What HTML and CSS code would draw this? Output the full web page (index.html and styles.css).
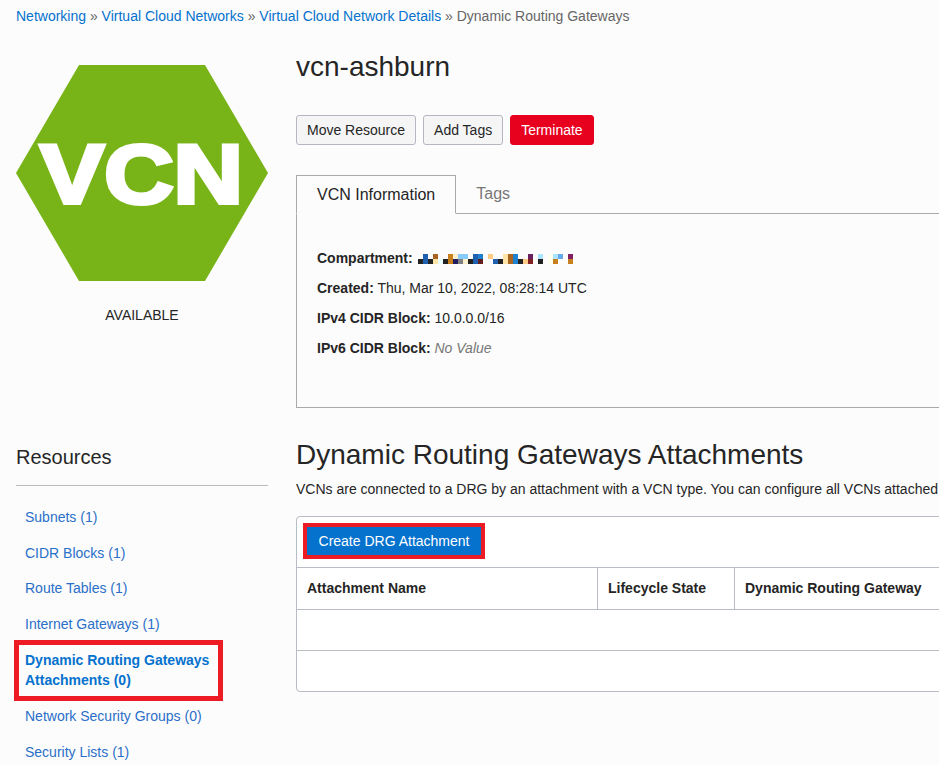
FILE: index.html
```html
<!DOCTYPE html>
<html lang="en">
<head>
    <meta charset="UTF-8">
    <title>Dynamic Routing Gateways</title>
    <link rel="stylesheet" href="styles.css">
</head>
<body>
    <nav class="breadcrumb">
        <a href="#">Networking</a> » <a href="#">Virtual Cloud Networks</a> » <a href="#">Virtual Cloud Network Details</a> » Dynamic Routing Gateways
    </nav>
    <div class="layout">
        <div class="status">
            <svg class="hexagon" width="252" height="216" viewBox="0 0 252 216">
                <polygon points="63,0 189,0 252,108 189,216 63,216 0,108" fill="#78b418"/>
                <text x="24" y="138" textLength="203" lengthAdjust="spacingAndGlyphs" class="hexagon-text">VCN</text>
            </svg>
            <div class="status-label">AVAILABLE</div>
        </div>
        <div class="details">
            <h1 class="title">vcn-ashburn</h1>
            <div class="actions">
                <button class="btn">Move Resource</button>
                <button class="btn">Add Tags</button>
                <button class="btn btn-danger">Terminate</button>
            </div>
            <div class="tabs">
                <div class="tab active">VCN Information</div>
                <div class="tab">Tags</div>
            </div>
            <div class="tab-panel">
                <div class="info-row">
                    <b>Compartment:</b>
                    <svg class="redacted" width="155" height="10" viewBox="0 0 31 2" shape-rendering="crispEdges">
                        <rect x="1" y="0" width="1" height="2" fill="#2060b0"/>
                        <rect x="3" y="0" width="1" height="1" fill="#a86420"/>
                        <rect x="6" y="0" width="1" height="2" fill="#c8801f"/>
                        <rect x="7" y="0" width="1" height="1" fill="#fff0d0"/>
                        <rect x="8" y="0" width="2" height="1" fill="#88ccff"/>
                        <rect x="11" y="0" width="1" height="2" fill="#2060b0"/>
                        <rect x="12" y="0" width="1" height="1" fill="#2080d0"/>
                        <rect x="14" y="0" width="1" height="1" fill="#ffcc88"/>
                        <rect x="17" y="0" width="1" height="2" fill="#ffe4a8"/>
                        <rect x="18" y="0" width="1" height="2" fill="#a86420"/>
                        <rect x="19" y="0" width="1" height="2" fill="#2080d0"/>
                        <rect x="22" y="0" width="1" height="1" fill="#6b2060"/>
                        <rect x="24" y="0" width="1" height="1" fill="#aae4ff"/>
                        <rect x="26" y="0" width="1" height="2" fill="#fffff0"/>
                        <rect x="27" y="0" width="1" height="1" fill="#aae4ff"/>
                        <rect x="28" y="0" width="1" height="1" fill="#66aaee"/>
                        <rect x="30" y="0" width="1" height="1" fill="#802060"/>
                        <rect x="0" y="1" width="1" height="1" fill="#222"/>
                        <rect x="2" y="1" width="1" height="1" fill="#222"/>
                        <rect x="3" y="1" width="1" height="1" fill="#ffe4a8"/>
                        <rect x="4" y="1" width="1" height="1" fill="#e8ffff"/>
                        <rect x="5" y="1" width="1" height="1" fill="#222"/>
                        <rect x="7" y="1" width="1" height="1" fill="#202060"/>
                        <rect x="8" y="1" width="1" height="1" fill="#808080"/>
                        <rect x="9" y="1" width="1" height="1" fill="#fff0d0"/>
                        <rect x="10" y="1" width="1" height="1" fill="#222"/>
                        <rect x="12" y="1" width="1" height="1" fill="#602020"/>
                        <rect x="15" y="1" width="1" height="1" fill="#2060b0"/>
                        <rect x="16" y="1" width="1" height="1" fill="#222"/>
                        <rect x="20" y="1" width="1" height="1" fill="#222"/>
                        <rect x="21" y="1" width="1" height="1" fill="#ffcc88"/>
                        <rect x="22" y="1" width="1" height="1" fill="#802020"/>
                        <rect x="24" y="1" width="1" height="1" fill="#222"/>
                        <rect x="27" y="1" width="1" height="1" fill="#c8801f"/>
                        <rect x="30" y="1" width="1" height="1" fill="#c8801f"/>
                    </svg>
                </div>
                <div class="info-row"><b>Created:</b> Thu, Mar 10, 2022, 08:28:14 UTC</div>
                <div class="info-row"><b>IPv4 CIDR Block:</b> 10.0.0.0/16</div>
                <div class="info-row"><b>IPv6 CIDR Block:</b> <i class="no-value">No Value</i></div>
            </div>
        </div>
        <div class="resources">
            <h2 class="resources-title">Resources</h2>
            <ul class="resource-list">
                <li><a href="#">Subnets (1)</a></li>
                <li><a href="#">CIDR Blocks (1)</a></li>
                <li><a href="#">Route Tables (1)</a></li>
                <li><a href="#">Internet Gateways (1)</a></li>
                <li class="selected"><a href="#">Dynamic Routing Gateways Attachments (0)</a></li>
                <li><a href="#">Network Security Groups (0)</a></li>
                <li><a href="#">Security Lists (1)</a></li>
            </ul>
        </div>
        <div class="attachments">
            <h2 class="section-title">Dynamic Routing Gateways Attachments</h2>
            <p class="section-text">VCNs are connected to a DRG by an attachment with a VCN type. You can configure all VCNs attached</p>
            <div class="table-card">
                <div class="toolbar">
                    <button class="btn-primary">Create DRG Attachment</button>
                </div>
                <table class="grid">
                    <thead>
                        <tr>
                            <th class="col-name">Attachment Name</th>
                            <th class="col-state">Lifecycle State</th>
                            <th>Dynamic Routing Gateway</th>
                        </tr>
                    </thead>
                    <tbody>
                        <tr><td colspan="3"></td></tr>
                        <tr><td colspan="3"></td></tr>
                    </tbody>
                </table>
            </div>
        </div>
    </div>
</body>
</html>
```
FILE: styles.css
```css
html, body {
    height: 765px;
    overflow: hidden;
}
body {
    margin: 0;
    background: #fcfcfc;
    color: #252525;
    font-family: "Liberation Sans", Arial, sans-serif;
    font-size: 14px;
    line-height: 20px;
}
a {
    color: #0572ce;
    text-decoration: none;
}
.breadcrumb {
    padding: 6px 0 0 16px;
    color: #666;
    white-space: nowrap;
}
.layout {
    display: grid;
    grid-template-columns: 252px 800px;
    grid-template-rows: 388px auto;
    column-gap: 28px;
    padding-left: 16px;
    margin-top: 23px;
}

/* hexagon */
.status {
    padding-top: 16px;
}
.hexagon {
    display: block;
}
.hexagon-text {
    fill: #fff;
    stroke: #fff;
    stroke-width: 4px;
    font-family: "Liberation Sans", Arial, sans-serif;
    font-size: 83px;
    font-weight: bold;
}
.status-label {
    margin-top: 24px;
    text-align: center;
}

/* details */
.title {
    margin: 0;
    padding-top: 0;
    font-size: 28px;
    font-weight: normal;
    line-height: 36px;
}
.actions {
    display: flex;
    gap: 7px;
    margin-top: 30px;
}
.btn {
    height: 30px;
    padding: 0 10px;
    background: #f5f5f5;
    border: 1px solid #b4b7bf;
    border-radius: 3px;
    color: #252525;
    font-family: inherit;
    font-size: 14px;
}
.btn-danger {
    background: #e8001f;
    border-color: #e8001f;
    color: #fff;
}
.tabs {
    display: flex;
    margin-top: 30px;
    border-bottom: 1px solid #aaa;
    font-size: 16px;
}
.tab {
    padding: 9px 20px 8px;
    color: #777;
    margin-bottom: -1px;
}
.tab.active {
    background: #fcfcfc;
    border: 1px solid #aaa;
    border-bottom-color: #fcfcfc;
    color: #252525;
}
.tab-panel {
    height: 194px;
    box-sizing: border-box;
    padding: 29px 20px 0;
    border-left: 1px solid #aaa;
    border-bottom: 1px solid #aaa;
}
.info-row {
    height: 30px;
    line-height: 30px;
}
.redacted {
    margin-left: 1px;
    vertical-align: -1px;
}
.no-value {
    color: #777;
}

/* resources */
.resources-title {
    margin: 0;
    padding: 9px 0 17px;
    border-bottom: 1px solid #bbb;
    font-size: 20px;
    font-weight: normal;
    line-height: 22px;
}
.resource-list {
    margin: 0;
    padding: 21px 0 0 9px;
    list-style: none;
}
.resource-list li {
    margin-bottom: 15.7px;
}
.resource-list li a {
    color: #2a6fc9;
}
.resource-list .selected {
    position: relative;
    margin-bottom: 16.5px;
    font-weight: bold;
}
.resource-list .selected a {
    color: #0572ce;
}
.resource-list .selected::after {
    content: "";
    position: absolute;
    top: -10px;
    bottom: -11px;
    left: -11px;
    width: 199px;
    border: 5px solid #ed1c24;
}

/* attachments */
.section-title {
    margin: 0;
    font-size: 28px;
    font-weight: normal;
    line-height: 36px;
}
.section-text {
    margin: 6px 0 0;
    white-space: nowrap;
}
.table-card {
    margin-top: 17px;
    background: #fff;
    border: 1px solid #b8bcc5;
    border-radius: 4px;
}
.toolbar {
    padding: 6px;
    height: 38px;
}
.btn-primary {
    display: block;
    box-sizing: border-box;
    width: 182px;
    height: 36px;
    background: #0572ce;
    border: 4px solid #ed1c24;
    color: #fff;
    font-family: inherit;
    font-size: 14px;
}
.grid {
    width: 100%;
    border-collapse: collapse;
    table-layout: fixed;
}
.grid th {
    height: 39px;
    padding: 0 10px 2px;
    border-top: 1px solid #b8bcc5;
    border-bottom: 1px solid #b8bcc5;
    border-left: 1px solid #b8bcc5;
    text-align: left;
}
.grid th:first-child {
    border-left: 0;
}
.col-name {
    width: 280px;
}
.col-state {
    width: 116px;
}
.grid td {
    height: 40px;
    padding: 0;
    border-bottom: 1px solid #b8bcc5;
}
.grid tbody tr:last-child td {
    border-bottom: 0;
}
```
